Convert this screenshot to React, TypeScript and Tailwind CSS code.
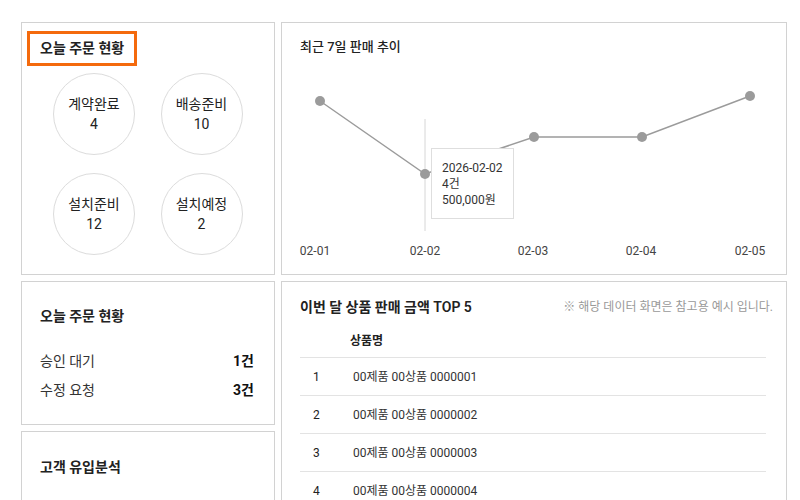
import React from "react";

const circles = [
  { label: "계약완료", value: 4 },
  { label: "배송준비", value: 10 },
  { label: "설치준비", value: 12 },
  { label: "설치예정", value: 2 },
];

const points = [
  { x: 38, y: 45, label: "02-01", lx: 33 },
  { x: 143, y: 118, label: "02-02", lx: 143 },
  { x: 252, y: 81, label: "02-03", lx: 251 },
  { x: 360, y: 81, label: "02-04", lx: 359 },
  { x: 468, y: 40, label: "02-05", lx: 468 },
];

const products = [
  "00제품 00상품 0000001",
  "00제품 00상품 0000002",
  "00제품 00상품 0000003",
  "00제품 00상품 0000004",
  "00제품 00상품 0000005",
];

function Card({ className, children }: { className?: string; children: React.ReactNode }) {
  return (
    <section className={"shrink-0 border border-[#d2d2d2] bg-white " + (className ?? "")}>{children}</section>
  );
}

function OrderCircles() {
  return (
    <Card className="h-[253px] w-[254px] px-[5px] pt-[8px]">
      <div className="inline-flex h-[35px] items-center border-[3px] border-[#f46a0d] px-[10px]">
        <h2 className="text-[14px] font-semibold text-[#222]">오늘 주문 현황</h2>
      </div>
      <div className="mx-auto mt-[7px] grid w-[190px] grid-cols-2 gap-x-[25px] gap-y-[18px]">
        {circles.map((c) => (
          <div
            key={c.label}
            className="flex h-[82px] w-[82px] flex-col items-center justify-center rounded-full border border-[#dcdcdc] text-[14px] leading-[20px] text-[#222]"
          >
            <span>{c.label}</span>
            <span>{c.value}</span>
          </div>
        ))}
      </div>
    </Card>
  );
}

function SalesTrend() {
  const path = points.map((p, i) => (i === 0 ? "M" : "L") + p.x + " " + p.y).join(" ");
  return (
    <Card className="relative h-[253px] w-[506px]">
      <h2 className="pl-[18px] pt-[15px] text-[13px] font-medium leading-[18px] text-[#222]">최근 7일 판매 추이</h2>
      <svg width="504" height="216" className="block">
        <line x1="143" y1="63" x2="143" y2="175" stroke="#d6d6d6" strokeWidth="1" />
        <path d={path} fill="none" stroke="#9b9b9b" strokeWidth="1.5" />
        {points.map((p) => (
          <circle key={p.label} cx={p.x} cy={p.y} r="5" fill="#9b9b9b" />
        ))}
        {points.map((p) => (
          <text
            key={"l" + p.label}
            x={p.lx}
            y="199"
            textAnchor="middle"
            fontSize="12"
            fill="#444"
          >
            {p.label}
          </text>
        ))}
      </svg>
      <div className="absolute left-[149px] top-[125px] h-[71px] w-[83px] whitespace-nowrap border border-[#dedede] bg-white px-[10px] pt-[11px] text-[12px] leading-[16px] text-[#333]">
        <p>2026-02-02</p>
        <p>4건</p>
        <p>500,000원</p>
      </div>
    </Card>
  );
}

function PendingCard() {
  return (
    <Card className="h-[144px] px-[18px] pt-[24px]">
      <h2 className="text-[14px] font-semibold leading-[20px] text-[#222]">오늘 주문 현황</h2>
      <div className="mt-[25px] flex flex-col gap-[9px] text-[14px] leading-[20px] text-[#333]">
        <div className="flex justify-between pr-[2px]">
          <span>승인 대기</span>
          <span className="font-bold text-[#111]">1건</span>
        </div>
        <div className="flex justify-between pr-[2px]">
          <span>수정 요청</span>
          <span className="font-bold text-[#111]">3건</span>
        </div>
      </div>
    </Card>
  );
}

function TopProducts() {
  return (
    <Card className="h-[240px] w-[506px] pl-[18px] pr-[13px] pt-[15px]">
      <div className="flex items-center justify-between">
        <h2 className="text-[14px] font-semibold leading-[20px] text-[#222]">이번 달 상품 판매 금액 TOP 5</h2>
        <p className="text-[12px] text-[#999]">※ 해당 데이터 화면은 참고용 예시 입니다.</p>
      </div>
      <div className="mr-[7px] mt-[7px] text-[12px] text-[#333]">
        <div className="flex h-[34px] items-center border-b border-[#e3e3e3]">
          <span className="pl-[50px] font-semibold text-[#222]">상품명</span>
        </div>
        {products.map((name, i) => (
          <div key={name} className="flex h-[38px] items-center border-b border-[#e3e3e3]">
            <span className="w-[53px] pl-[13px] text-[#222]">{i + 1}</span>
            <span>{name}</span>
          </div>
        ))}
      </div>
    </Card>
  );
}

export default function App() {
  return (
    <div className="h-[500px] w-[800px] overflow-hidden bg-white pl-[21px] pt-[22px] font-['Roboto','Noto_Sans_CJK_KR',sans-serif]">
      <div className="flex gap-[6px]">
        <OrderCircles />
        <SalesTrend />
      </div>
      <div className="mt-[6px] flex gap-[6px]">
        <div className="flex w-[254px] shrink-0 flex-col gap-[6px]">
          <PendingCard />
          <Card className="h-[100px] px-[18px] pt-[25px]">
            <h2 className="text-[14px] font-semibold leading-[20px] text-[#222]">고객 유입분석</h2>
          </Card>
        </div>
        <TopProducts />
      </div>
    </div>
  );
}
